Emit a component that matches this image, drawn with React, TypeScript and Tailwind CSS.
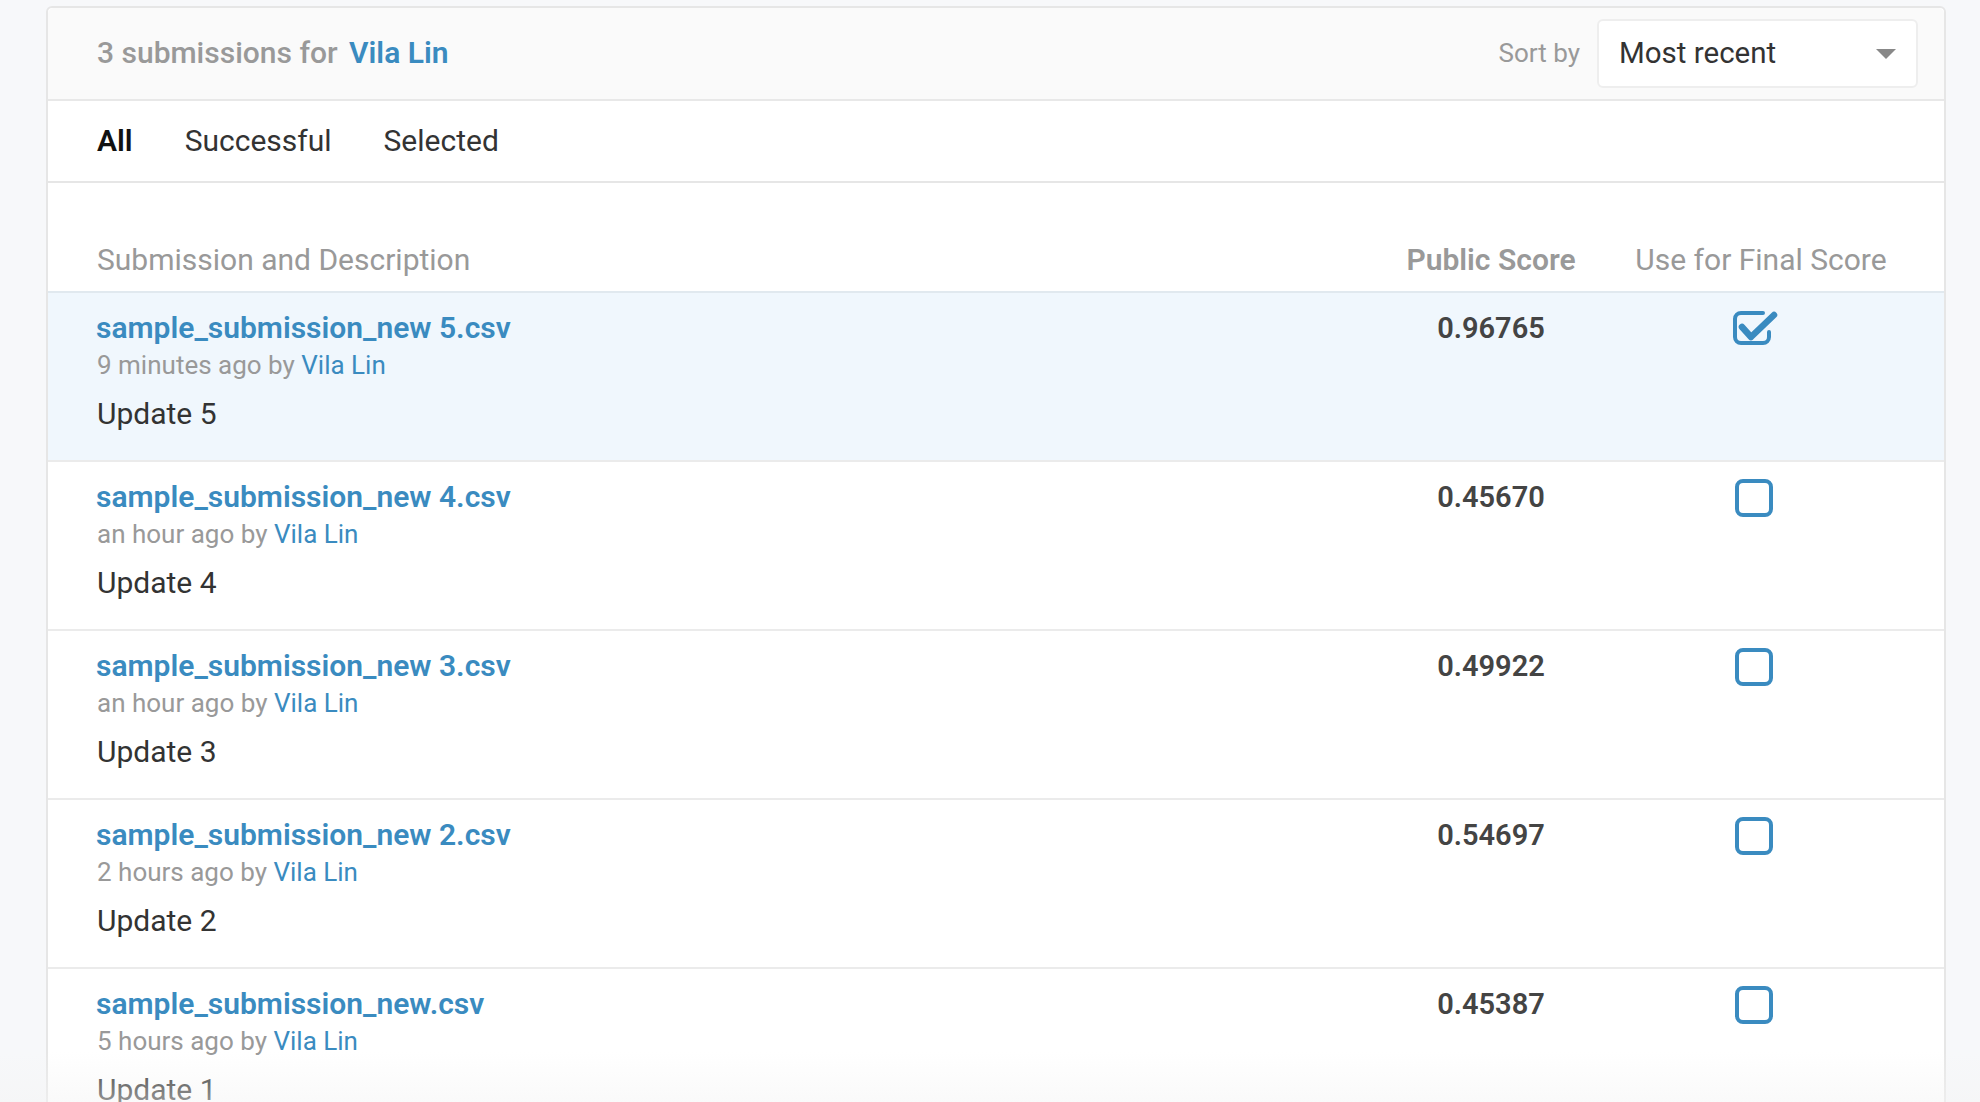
import React from "react";

const rows = [
  { file: "sample_submission_new 5.csv", when: "9 minutes ago", desc: "Update 5", score: "0.96765", checked: true },
  { file: "sample_submission_new 4.csv", when: "an hour ago", desc: "Update 4", score: "0.45670", checked: false },
  { file: "sample_submission_new 3.csv", when: "an hour ago", desc: "Update 3", score: "0.49922", checked: false },
  { file: "sample_submission_new 2.csv", when: "2 hours ago", desc: "Update 2", score: "0.54697", checked: false },
  { file: "sample_submission_new.csv", when: "5 hours ago", desc: "Update 1", score: "0.45387", checked: false },
];

function Checked() {
  return (
    <svg width="48" height="40" viewBox="0 0 48 40" fill="none">
      <path
        d="M32 4 H10 a6 6 0 0 0 -6 6 v18 a6 6 0 0 0 6 6 h22 a6 6 0 0 0 6 -6 v-5"
        stroke="#3a8bc0"
        strokeWidth="4"
        strokeLinecap="round"
      />
      <path d="M11 18 L20 28 L43 6" stroke="#3a8bc0" strokeWidth="6.5" strokeLinecap="round" strokeLinejoin="round" />
    </svg>
  );
}

function Unchecked() {
  return (
    <svg width="48" height="40" viewBox="0 0 48 40" fill="none">
      <rect x="6" y="3" width="34" height="34" rx="6" stroke="#3a8bc0" strokeWidth="4" />
    </svg>
  );
}

export default function App() {
  return (
    <div
      className="relative h-[1102px] w-[1980px] overflow-hidden bg-[#f7f8fa] pt-[6px] pl-[46px]"
      style={{ fontFamily: "Roboto, 'Liberation Sans', sans-serif" }}
    >
      <div className="w-[1900px] rounded-t-[6px] border-2 border-[#e6e6e6] bg-white">
        {/* header */}
        <div className="flex h-[93px] items-center justify-between rounded-t-[6px] border-b-2 border-[#e8e8e8] bg-[#fafafa] pl-[49px] pr-[26px]">
          <div className="-mt-[2px] text-[30px] font-medium leading-[36px] text-[#999999]">
            3 submissions for <span className="ml-[4px] font-semibold text-[#3a8bc0]">Vila Lin</span>
          </div>
          <div className="flex items-center gap-[17px]">
            <span className="text-[26px] text-[#999999]">Sort by</span>
            <div className="flex h-[69px] w-[321px] items-center justify-between rounded-[6px] border-2 border-[#eeeeee] bg-white pl-[20px] pr-[20px]">
              <span className="text-[29.5px] text-[#333333]">Most recent</span>
              <svg width="20" height="10" viewBox="0 0 20 10">
                <path d="M0 0 H20 L10 10 Z" fill="#888888" />
              </svg>
            </div>
          </div>
        </div>
        {/* tabs */}
        <div className="flex h-[82px] items-center gap-[52px] border-b-2 border-[#e6e6e6] pl-[49px] text-[30px] leading-[36px]">
          <span className="font-semibold text-[#111111]">All</span>
          <span className="text-[#333333]">Successful</span>
          <span className="text-[#333333]">Selected</span>
        </div>
        {/* table head */}
        <div className="grid h-[110px] grid-cols-[1fr_230px_310px] items-end border-b-2 border-[#e1e9ef] pb-[14px] pl-[49px] pr-[28px] text-[30px] leading-[34px] text-[#999999]">
          <span>Submission and Description</span>
          <span className="text-center font-semibold">Public Score</span>
          <span className="text-center">Use for Final Score</span>
        </div>
        {rows.map((r, i) => (
          <div
            key={i}
            className={`grid h-[169px] grid-cols-[1fr_230px_310px] border-b-2 border-[#ebebeb] pl-[48px] pr-[28px] pt-[18px] ${
              i === 0 ? "bg-[#f0f7fd]" : "bg-white"
            }`}
          >
            <div className="flex flex-col">
              <span className="text-[30px] font-semibold leading-[34px] text-[#3a8bc0]">{r.file}</span>
              <span className="mt-[5px] pl-[1px] text-[26px] leading-[30px] text-[#999999]">
                {r.when} by <span className="text-[#3a8bc0]">Vila Lin</span>
              </span>
              <span className="mt-[17px] pl-[1px] text-[30px] leading-[34px] text-[#333333]">{r.desc}</span>
            </div>
            <div className="text-center text-[29px] font-semibold leading-[34px] text-[#444444]">{r.score}</div>
            <div className="-mt-[2px] flex justify-center pr-[12px]">{r.checked ? <Checked /> : <Unchecked />}</div>
          </div>
        ))}
      </div>
      <div className="pointer-events-none absolute bottom-0 left-0 h-[50px] w-full bg-gradient-to-b from-transparent to-[#f4f4f4]/50" />
    </div>
  );
}
